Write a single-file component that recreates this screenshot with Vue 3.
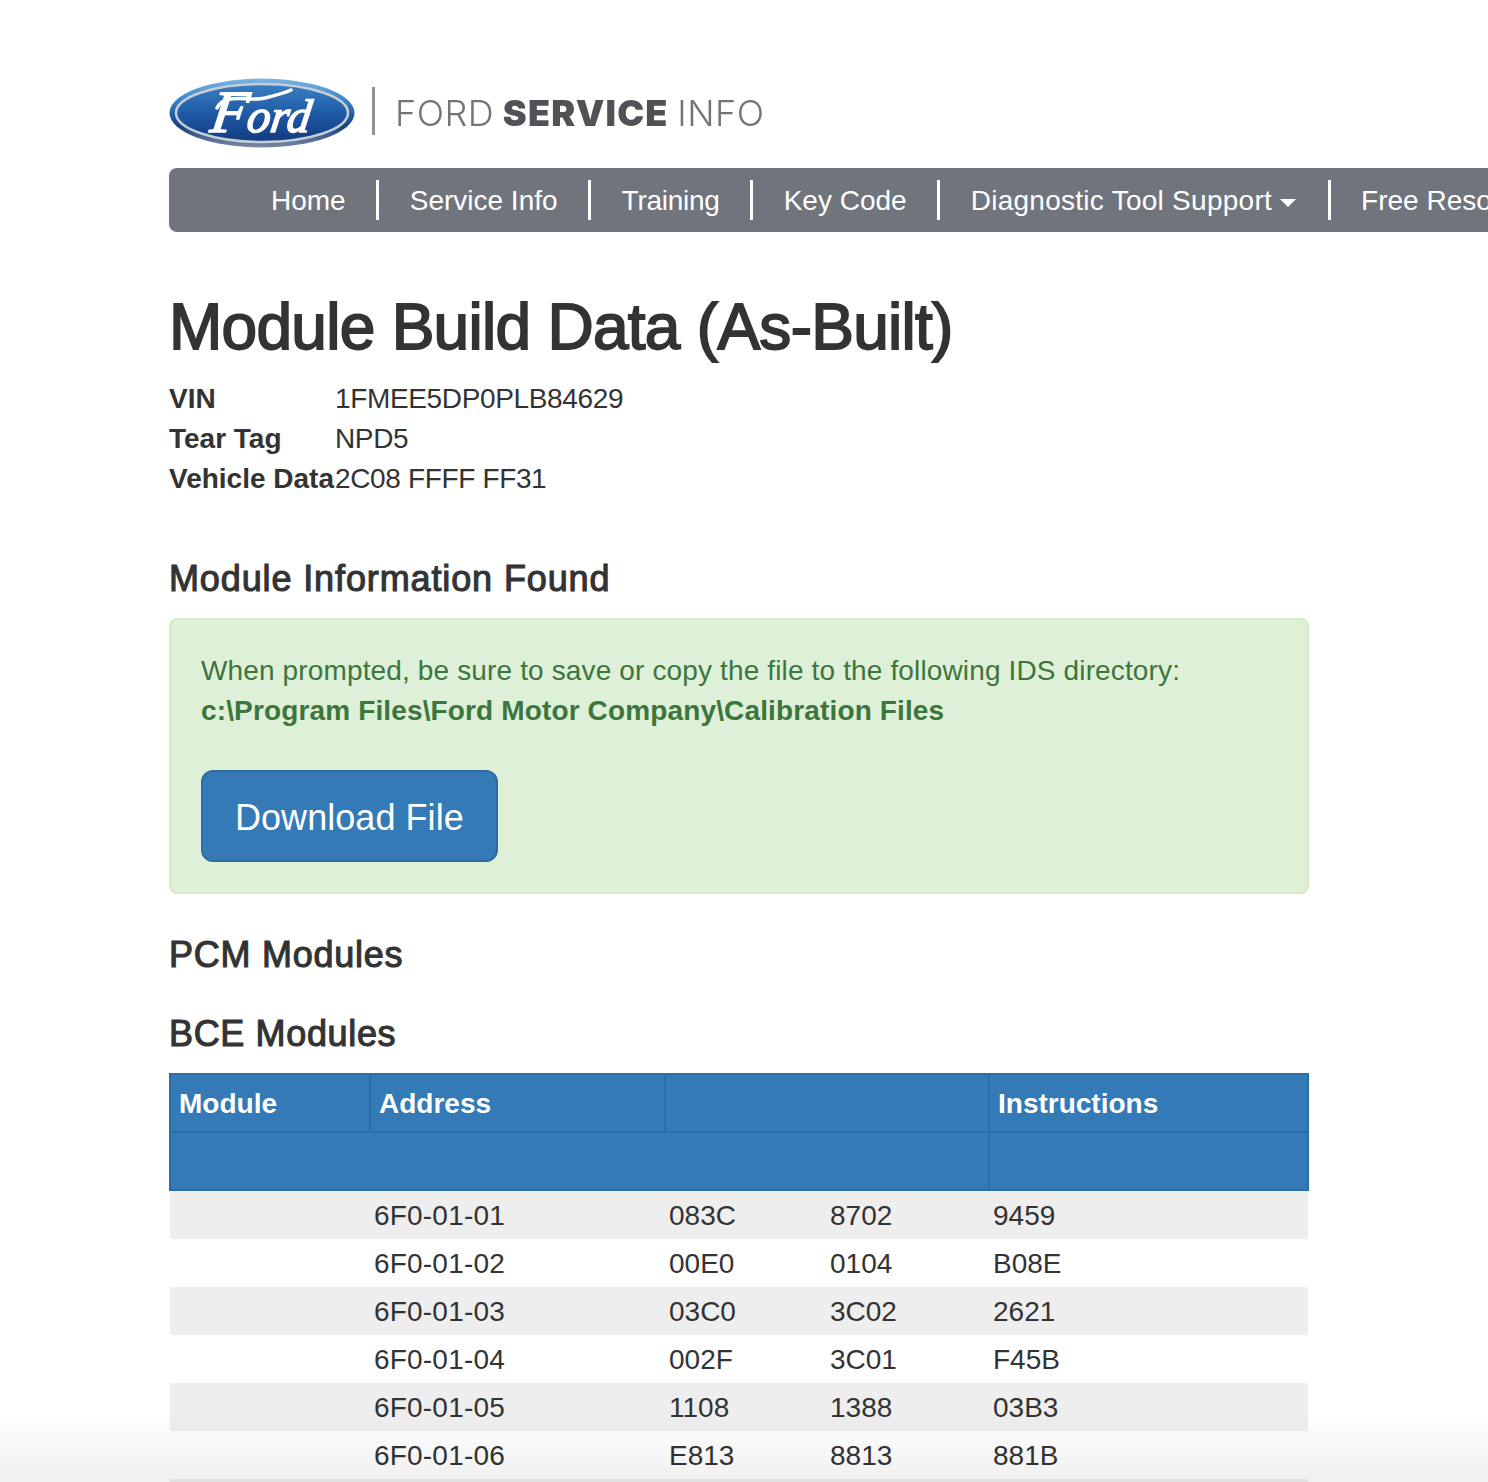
<script setup>
const navItems = ['Home', 'Service Info', 'Training', 'Key Code']

const buildInfo = [
  { label: 'VIN', value: '1FMEE5DP0PLB84629' },
  { label: 'Tear Tag', value: 'NPD5' },
  { label: 'Vehicle Data', value: '2C08 FFFF FF31' },
]

const rows = [
  ['6F0-01-01', '083C', '8702', '9459'],
  ['6F0-01-02', '00E0', '0104', 'B08E'],
  ['6F0-01-03', '03C0', '3C02', '2621'],
  ['6F0-01-04', '002F', '3C01', 'F45B'],
  ['6F0-01-05', '1108', '1388', '03B3'],
  ['6F0-01-06', 'E813', '8813', '881B'],
]
</script>

<template>
  <div class="page">
    <div class="container">
      <!-- logo -->
      <div class="brand">
        <svg class="oval" viewBox="0 0 186 70" width="186" height="70">
          <defs>
            <linearGradient id="ovalBand" x1="0" y1="0" x2="0" y2="1">
              <stop offset="0" stop-color="#7db6e2" />
              <stop offset="0.3" stop-color="#3c86c8" />
              <stop offset="0.7" stop-color="#173f7e" />
              <stop offset="1" stop-color="#7d8ba0" />
            </linearGradient>
            <linearGradient id="ovalBlue" x1="0" y1="0" x2="0" y2="1">
              <stop offset="0" stop-color="#3a7fc2" />
              <stop offset="0.5" stop-color="#1f5ba6" />
              <stop offset="1" stop-color="#123a80" />
            </linearGradient>
          </defs>
          <ellipse cx="93" cy="35" rx="92.5" ry="34.5" fill="url(#ovalBand)" />
          <ellipse cx="93" cy="35" rx="86" ry="29" fill="url(#ovalBlue)" stroke="#c5ced8" stroke-width="2.5" />
          <g transform="translate(90 54) skewX(-8)">
            <text text-anchor="middle" class="oval-text"><tspan class="oval-cap">F</tspan>ord</text>
          </g>
          <path d="M48 30 C56 14 78 24 96 20 C108 17 118 14 122 12" fill="none" stroke="#fff" stroke-width="3.5" stroke-linecap="round" />
        </svg>
        <span class="brand-rule"></span>
        <span class="brand-name">FORD <b>SERVICE</b> INFO</span>
      </div>

      <!-- 导航 -->
      <nav class="navbar">
        <a v-for="item in navItems" :key="item" class="nav-link">{{ item }}</a>
        <a class="nav-link diag">Diagnostic Tool Support<i class="caret"></i></a>
        <a class="nav-link last">Free Resources</a>
      </nav>

      <h1>Module Build Data (As-Built)</h1>

      <dl class="info">
        <template v-for="item in buildInfo" :key="item.label">
          <dt>{{ item.label }}</dt>
          <dd>{{ item.value }}</dd>
        </template>
      </dl>

      <h3 class="found">Module Information Found</h3>

      <div class="alert">
        <p>
          When prompted, be sure to save or copy the file to the following IDS directory:<br />
          <strong>c:\Program Files\Ford Motor Company\Calibration Files</strong>
        </p>
        <button class="btn">Download File</button>
      </div>

      <h3 class="pcm">PCM Modules</h3>
      <h3 class="bce">BCE Modules</h3>

      <table class="modules">
        <colgroup>
          <col class="c1" />
          <col class="c2" />
          <col class="c3" />
          <col class="c4" />
          <col class="c5" />
        </colgroup>
        <thead>
          <tr class="head-a">
            <th>Module</th>
            <th>Address</th>
            <th colspan="2"></th>
            <th>Instructions</th>
          </tr>
          <tr class="head-b">
            <th colspan="4"></th>
            <th></th>
          </tr>
        </thead>
        <tbody>
          <tr v-for="row in rows" :key="row[0]">
            <td></td>
            <td v-for="cell in row" :key="cell">{{ cell }}</td>
          </tr>
          <tr class="cut"><td colspan="5"></td></tr>
        </tbody>
      </table>
    </div>
    <div class="fade"></div>
  </div>
</template>

<style scoped>
.page {
  position: relative;
  height: 1482px;
  overflow: hidden;
  background: #fff;
  color: #333;
  font-family: 'Liberation Sans', Arial, sans-serif;
  font-size: 28px;
  line-height: 40px;
}
.container {
  width: 1140px;
  margin-left: 169px;
  padding-top: 78px;
}

.brand {
  display: flex;
  align-items: center;
  height: 70px;
  margin-bottom: 20px;
  filter: blur(0.7px);
}
.oval {
  flex: none;
}
.oval-text {
  font-family: 'Liberation Serif', serif;
  font-style: italic;
  font-size: 47px;
  fill: #fff;
  stroke: #fff;
  stroke-width: 1.5px;
}
.oval-cap {
  font-size: 60px;
}
.brand-rule {
  width: 3px;
  height: 48px;
  margin: 0 20px 4px 17px;
  background: #8c9196;
}
.brand-name {
  font-family: Inter, 'Liberation Sans', sans-serif;
  font-size: 36px;
  font-weight: 300;
  letter-spacing: 0.5px;
  word-spacing: -2px;
  white-space: pre;
  color: #70757a;
}
.brand-name b {
  font-weight: 900;
  letter-spacing: 1.2px;
  color: #4f5358;
}

.navbar {
  display: flex;
  align-items: center;
  width: 1400px;
  height: 64px;
  padding-left: 102px;
  background: #70757d;
  border-radius: 8px 0 0 8px;
  color: #fff;
  white-space: nowrap;
}
.nav-link {
  height: 40px;
  padding-right: 30px;
  margin-right: 31px;
  border-right: 3px solid #fff;
  line-height: 42px;
}
.nav-link:nth-child(3) {
  letter-spacing: -0.25px;
}
.nav-link.diag {
  padding-right: 32px;
  margin-right: 30px;
  letter-spacing: 0.27px;
}
.nav-link.last {
  border-right: 0;
}
.caret {
  display: inline-block;
  margin-left: 8px;
  vertical-align: middle;
  border-top: 8px solid #fff;
  border-left: 8px solid transparent;
  border-right: 8px solid transparent;
}

h1 {
  margin: 60px 0 17px;
  font-size: 64px;
  font-weight: 400;
  -webkit-text-stroke: 1.8px #333;
  letter-spacing: -0.72px;
  line-height: 70px;
  color: #333;
}

.info {
  display: grid;
  grid-template-columns: max-content 1fr;
  margin: 0;
}
.info dt {
  font-weight: 700;
}
.info dd {
  margin: 0 0 0 1px;
  letter-spacing: -0.35px;
}

h3 {
  margin: 0;
  font-size: 36px;
  font-weight: 400;
  -webkit-text-stroke: 1.1px #333;
  letter-spacing: 0.75px;
  line-height: 40px;
}
.found {
  margin-top: 60px;
  letter-spacing: 0.88px;
}

.alert {
  margin-top: 19px;
  padding: 31px 30px 30px;
  background: #dff0d8;
  border: 2px solid #d6e9c6;
  border-radius: 8px;
  color: #3c763d;
  letter-spacing: 0.14px;
}
.alert p {
  margin: 0 0 39px;
}
.btn {
  display: block;
  height: 92px;
  padding: 3px 32px 0;
  background: #337ab7;
  border: 2px solid #2e6da4;
  border-radius: 12px;
  color: #fff;
  font-family: inherit;
  font-size: 36px;
  letter-spacing: 0.05px;
}

.pcm {
  margin-top: 41px;
}
.bce {
  margin-top: 39px;
  margin-bottom: 19px;
  letter-spacing: 0.65px;
}

.modules {
  width: 1138px;
  table-layout: fixed;
  border-collapse: collapse;
}
.c1 { width: 200px; }
.c2 { width: 295px; }
.c3 { width: 161px; }
.c4 { width: 163px; }
.c5 { width: 319px; }
.modules th {
  padding: 2px 8px 0;
  background: #337ab7;
  border: 2px solid #2e6da4;
  color: #fff;
  font-weight: 700;
  text-align: left;
}
.head-a th {
  height: 54px;
}
.head-b th {
  height: 54px;
}
.modules td {
  box-sizing: border-box;
  height: 48px;
  padding: 2px 4px 0;
  line-height: 40px;
}
/* 第一行多出表头边框的高度 */
.modules tbody tr:first-child td {
  height: 49px;
  padding-top: 1px;
}
.modules td:nth-child(2) {
  letter-spacing: 0.2px;
}
.modules tbody tr:nth-child(odd) {
  background: #eee;
}
.fade {
  position: absolute;
  left: 0;
  right: 0;
  bottom: 0;
  height: 70px;
  background: linear-gradient(rgba(0, 0, 0, 0), rgba(0, 0, 0, 0.06));
  pointer-events: none;
}
</style>

<style>
html,
body {
  margin: 0;
  overflow: hidden;
}
</style>
